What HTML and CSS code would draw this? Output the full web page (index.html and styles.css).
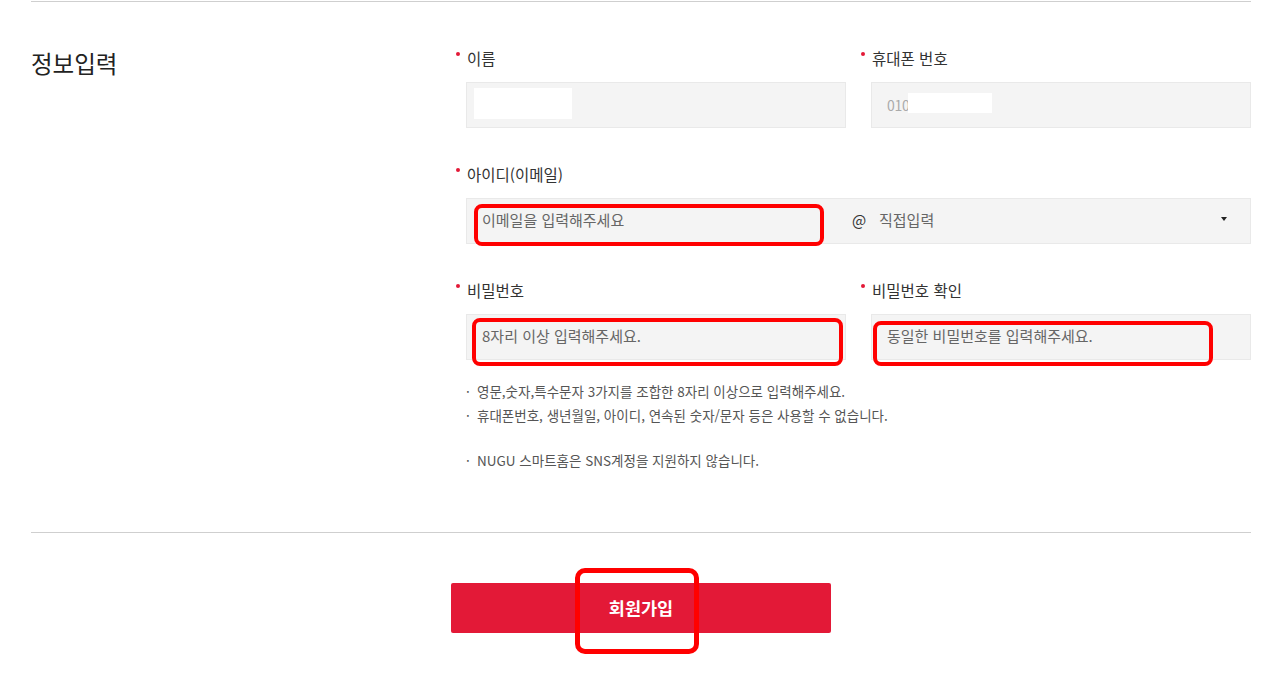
FILE: index.html
```html
<!DOCTYPE html>
<html lang="ko">
<head>
<meta charset="utf-8">
<title>회원가입</title>
<link rel="stylesheet" href="styles.css">
</head>
<body>
<div class="wrap">
  <section class="section">
    <h2 class="title">정보입력</h2>
    <div class="form">
      <div class="field">
        <label class="label"><span class="dot"></span>이름</label>
        <div class="box"><span class="mask mask-name"></span></div>
      </div>
      <div class="field">
        <label class="label"><span class="dot"></span>휴대폰 번호</label>
        <div class="box"><span class="phone">010</span><span class="mask mask-phone"></span></div>
      </div>
      <div class="field wide">
        <label class="label"><span class="dot"></span>아이디(이메일)</label>
        <div class="box idbox">
          <span class="email ph">이메일을 입력해주세요</span>
          <span class="at">@</span>
          <span class="select">직접입력<span class="caret"></span></span>
          <span class="mark mark-email"></span>
        </div>
      </div>
      <div class="field">
        <label class="label"><span class="dot"></span>비밀번호</label>
        <div class="box"><span class="ph">8자리 이상 입력해주세요.</span><span class="mark mark-pw"></span></div>
      </div>
      <div class="field">
        <label class="label"><span class="dot"></span>비밀번호 확인</label>
        <div class="box"><span class="ph">동일한 비밀번호를 입력해주세요.</span><span class="mark mark-pw2"></span></div>
      </div>
      <ul class="notes wide">
        <li>영문,숫자,특수문자 3가지를 조합한 8자리 이상으로 입력해주세요.</li>
        <li>휴대폰번호, 생년월일, 아이디, 연속된 숫자/문자 등은 사용할 수 없습니다.</li>
        <li class="gap">NUGU 스마트홈은 SNS계정을 지원하지 않습니다.</li>
      </ul>
    </div>
  </section>
  <div class="actions">
    <div class="btnwrap">
      <button class="submit" type="button">회원가입</button>
      <span class="mark mark-btn"></span>
    </div>
  </div>
</div>
</body>
</html>
```

FILE: styles.css
```css
* { box-sizing: border-box; }
html, body { margin: 0; padding: 0; background: #fff; }
body {
  font-family: "Noto Sans CJK KR", "Noto Sans", sans-serif;
  color: #333;
}
.wrap {
  width: 1220px;
  margin-left: 31px;
  padding-top: 1px;
  padding-bottom: 50px;
}
.section {
  display: flex;
  border-top: 1px solid #cfcfcf;
  border-bottom: 1px solid #cfcfcf;
  padding-top: 46px;
  padding-bottom: 60px;
}
.title {
  width: 435px;
  flex: 0 0 435px;
  margin: 0;
  font-size: 23.5px;
  line-height: 30px;
  font-weight: 400;
  color: #222;
  letter-spacing: 0;
}
.form {
  flex: 0 0 785px;
  display: grid;
  grid-template-columns: 380px 380px;
  column-gap: 25px;
  row-gap: 36px;
}
.wide { grid-column: 1 / span 2; }
.label {
  position: relative;
  display: flex;
  align-items: center;
  height: 20px;
  margin-bottom: 14px;
  font-size: 15.5px;
  line-height: 20px;
  color: #333;
  padding-left: 1px;
}
.dot {
  position: absolute;
  left: -10px;
  top: 4px;
  width: 4px;
  height: 4px;
  border-radius: 50%;
  background: #e31937;
}
.box {
  position: relative;
  height: 46px;
  background: #f4f4f4;
  border: 1px solid #e9e9e9;
  display: flex;
  align-items: center;
  padding: 0 15px;
  font-size: 15px;
  color: #666;
}
.ph { color: #666; position: relative; top: -2px; }
.mask { background: #fff; display: block; }
.mask-name { width: 98px; height: 31px; margin-left: -8px; margin-top: -4px; }
.phone { color: #aaa; font-size: 14px; letter-spacing: -0.3px; }
.mask-phone { width: 84px; height: 20px; margin-top: -5px; margin-left: -1px; }
.idbox { padding: 0; }
.email { flex: 0 0 380px; padding-left: 15px; }
.at { width: 32px; padding-left: 5px; color: #333; font-size: 15px; position: relative; top: -2px; }
.select {
  flex: 1;
  display: flex;
  align-items: center;
  justify-content: space-between;
  padding-left: 0;
  padding-right: 23px;
  color: #666;
  position: relative;
  top: -2px;
}
.caret {
  width: 0; height: 0;
  border-left: 3.5px solid transparent;
  border-right: 3.5px solid transparent;
  border-top: 4px solid #222;
}
.mark {
  position: absolute;
  border: 4px solid #ff0000;
  border-radius: 8px;
  pointer-events: none;
}
.mark-email { left: 7px; top: 5px; width: 350px; height: 42px; }
.mark-pw { left: 5px; top: 3px; width: 371px; height: 48px; }
.mark-pw2 { left: 1px; top: 6px; width: 340px; height: 45px; }
.notes {
  list-style: none;
  margin: -17px 0 0 0;
  padding: 0;
  font-size: 13.5px;
  line-height: 24px;
  color: #555;
}
.notes li { position: relative; padding-left: 11px; letter-spacing: 0; }
.notes li::before {
  content: "·";
  position: absolute;
  left: 0;
  top: 0;
  color: #555;
}
.notes li.gap { margin-top: 21px; }
.actions {
  display: flex;
  justify-content: center;
  padding-top: 50px;
}
.btnwrap { position: relative; width: 380px; height: 50px; }
.submit {
  display: block;
  width: 380px;
  height: 50px;
  border: 0;
  border-radius: 2px;
  background: #e31937;
  color: #fff;
  font-family: "Noto Sans CJK KR", "Noto Sans", sans-serif;
  font-size: 17.5px;
  font-weight: 700;
  padding: 0 0 2px 0;
}
.mark-btn { left: 124px; top: -15px; width: 124px; height: 86px; border-width: 5px; border-radius: 10px; }
```
